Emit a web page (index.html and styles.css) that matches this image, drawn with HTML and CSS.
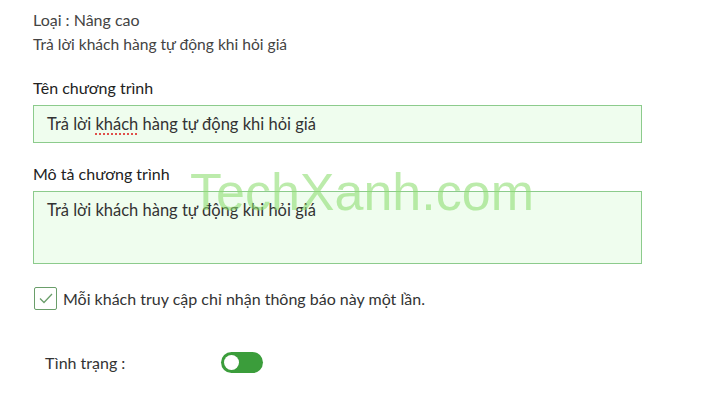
FILE: index.html
```
<!DOCTYPE html>
<html lang="vi">
<head>
    <meta charset="UTF-8">
    <title>Chương trình</title>
    <link rel="stylesheet" href="styles.css">
</head>
<body>
<div class="page">
    <div class="info">
        <p>Loại : Nâng cao</p>
        <p class="sub">Trả lời khách hàng tự động khi hỏi giá</p>
    </div>
    <div class="group">
        <label class="label">Tên chương trình</label>
        <div class="field">Trả lời <span class="typo">khách</span> hàng tự động khi hỏi giá</div>
    </div>
    <div class="group">
        <label class="label">Mô tả chương trình</label>
        <div class="field area">Trả lời khách hàng tự động khi hỏi giá</div>
    </div>
    <div class="check-row">
        <span class="check">
            <svg width="14" height="11" viewBox="0 0 14 11"><path d="M1 5.5 L5 9.5 L13 1" fill="none" stroke="#6a9e6a" stroke-width="1.3"/></svg>
        </span>
        <span class="check-text">Mỗi khách truy cập chỉ nhận thông báo này một lần.</span>
    </div>
    <div class="status">
        <span class="status-label">Tình trạng :</span>
        <span class="toggle"><span class="knob"></span></span>
    </div>
    <div class="watermark">TechXanh.com</div>
</div>
</body>
</html>
```
FILE: styles.css
```
*{
    margin: 0;
    padding: 0;
    box-sizing: border-box;
}
body{
    font-family: Lato, "Open Sans", sans-serif;
    color: #333;
    background: #fff;
}
.page{
    position: relative;
    width: 701px;
    height: 410px;
    padding: 8px 0 0 33px;
}
.info p{
    font-size: 16px;
    line-height: 24px;
    color: #444;
}
.info .sub{
    font-size: 15.6px;
}
.group{
    margin-top: 21px;
}
.group + .group{
    margin-top: 20px;
}
.label{
    display: block;
    font-size: 16px;
    line-height: 22px;
    color: #222;
    margin-bottom: 6px;
}
.field{
    width: 609px;
    height: 38px;
    border: 1px solid #8ccb8c;
    background: #effdee;
    font-size: 16.5px;
    line-height: 20px;
    padding: 8px 13px;
    color: #333;
}
.field.area{
    height: 73px;
    padding-top: 8px;
}
.typo{
    text-decoration: underline dotted #e0504a;
    text-decoration-thickness: 2px;
    text-underline-offset: 3px;
}
.check-row{
    display: flex;
    align-items: center;
    margin-top: 23px;
}
.check{
    width: 23px;
    height: 23px;
    border: 1px solid #6a9e6a;
    border-radius: 2px;
    display: flex;
    align-items: center;
    justify-content: center;
    margin-left: 1px;
}
.check-text{
    margin-left: 6px;
    font-size: 16px;
    color: #333;
}
.status{
    display: flex;
    align-items: center;
    margin-top: 42px;
    padding-left: 12px;
}
.status-label{
    width: 176px;
    font-size: 16px;
    color: #333;
}
.toggle{
    width: 42px;
    height: 21px;
    border-radius: 11px;
    background: #3b9d3b;
    position: relative;
}
.knob{
    position: absolute;
    left: 3px;
    top: 3px;
    width: 15px;
    height: 15px;
    border-radius: 50%;
    background: #fff;
}
.watermark{
    position: absolute;
    left: 190px;
    top: 162px;
    font-family: "Liberation Sans", Arial, sans-serif;
    font-size: 52px;
    color: rgba(140, 220, 110, 0.58);
    pointer-events: none;
}
```
